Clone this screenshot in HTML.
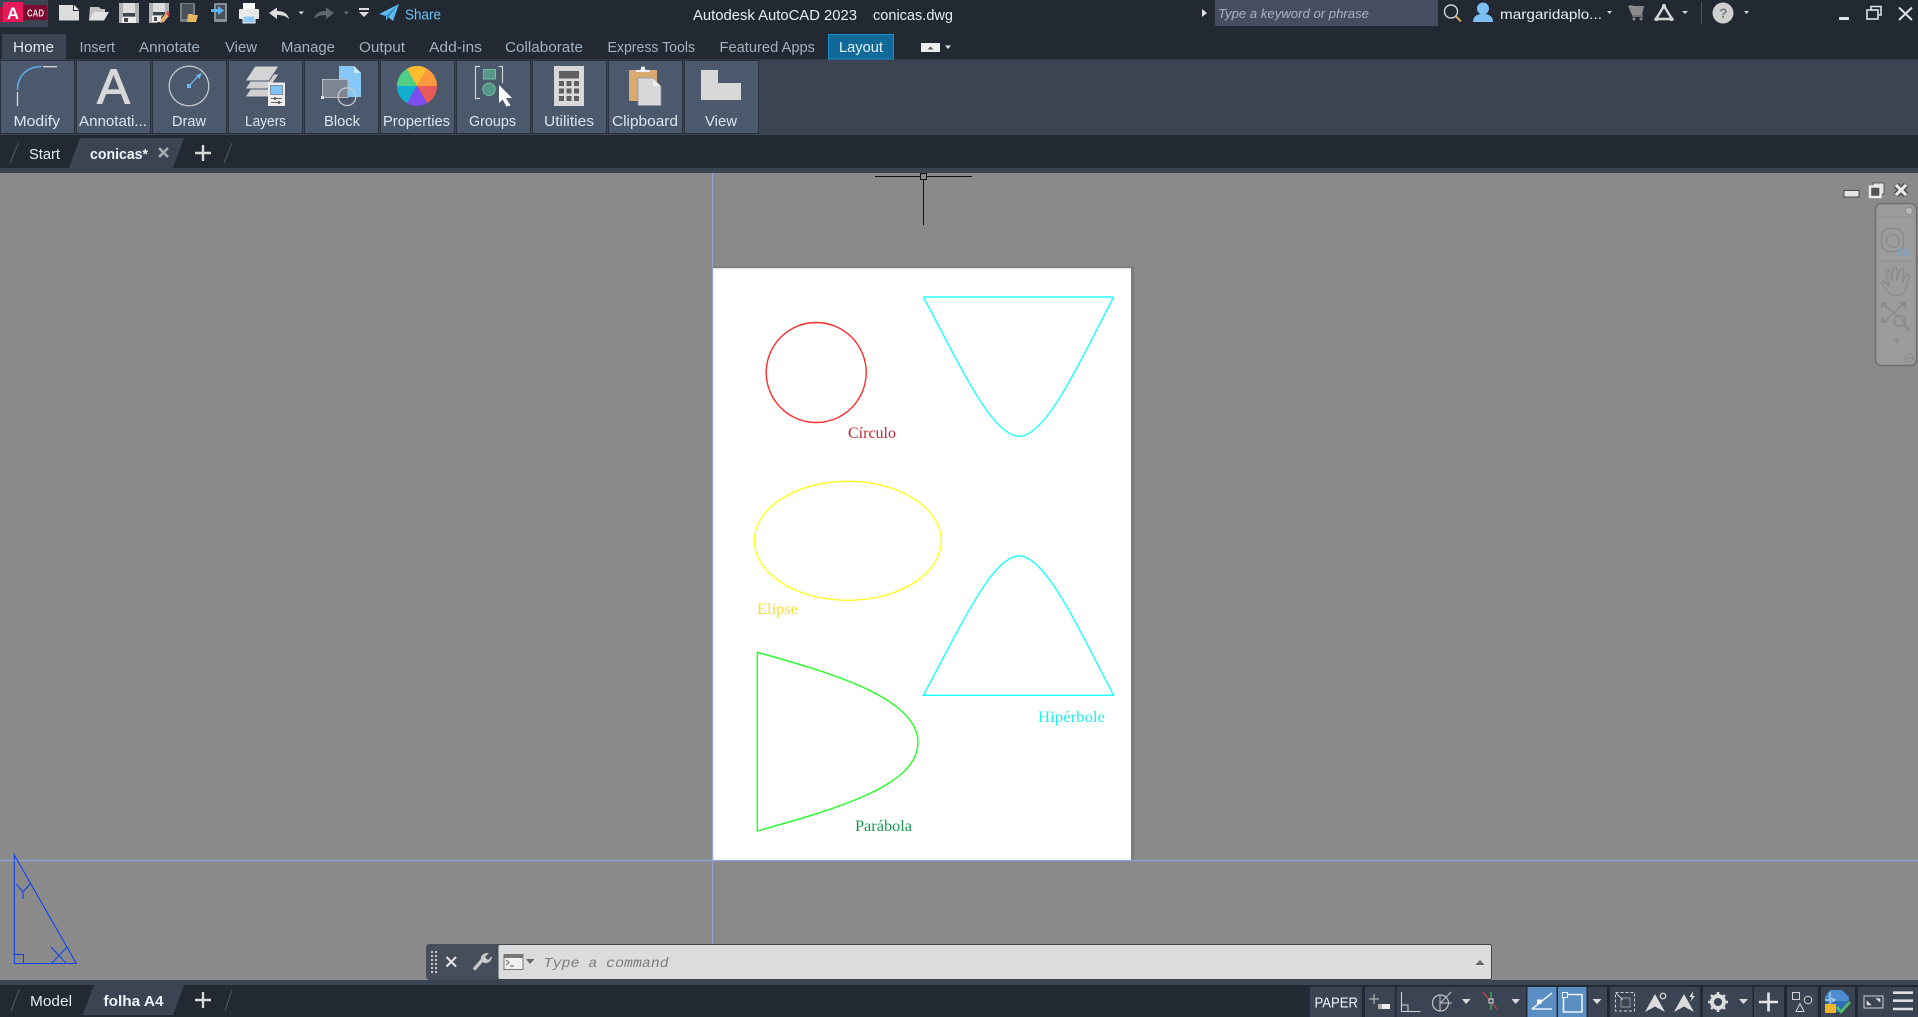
<!DOCTYPE html>
<html><head><meta charset="utf-8"><title>Autodesk AutoCAD 2023 conicas.dwg</title>
<style>
html,body{margin:0;padding:0;background:#8a8a8a;overflow:hidden;width:1918px;height:1017px}
svg{display:block;position:absolute;left:0;top:0}
text{font-family:"Liberation Sans",sans-serif}
.t{font-size:14.5px;fill:#a3b0c0}
.l{font-size:14.5px;fill:#dde5ee}
.s{font-family:"Liberation Serif",serif;font-size:16px}
</style></head><body>
<svg width="1918" height="1017" viewBox="0 0 1918 1017" xmlns="http://www.w3.org/2000/svg">
<!-- base -->
<rect width="1918" height="1017" fill="#8a8a8a"/>
<rect width="1918" height="60" fill="#222933"/>
<rect y="59" width="1918" height="1" fill="#333b48"/>
<rect y="60" width="1918" height="75" fill="#3b4453"/>
<rect y="135" width="1918" height="33" fill="#222933"/>
<rect y="168" width="1918" height="5" fill="#3b4453"/>

<!-- logo -->
<rect x="0" y="0" width="48" height="27" fill="#3b4453"/>
<rect x="23" y="5" width="24" height="15" fill="#7b0a30"/>
<path d="M0 7H23V22H0Z" fill="#b8113f"/>
<path d="M3 2H23V22H3Z" fill="#e8195a"/>
<text x="7" y="19" style="font-size:17px;font-weight:bold" fill="#fff" textLength="12" lengthAdjust="spacingAndGlyphs">A</text>
<text x="27" y="16.5" style="font-size:10.5px;font-weight:bold" fill="#ecdbe1" textLength="17" lengthAdjust="spacingAndGlyphs">CAD</text>

<!-- QAT -->
<path d="M59 5H73L79 11V20.5H59Z" fill="#dcdcdc"/><path d="M73 5V11H79" fill="#222933"/><path d="M74 5L79 10H74Z" fill="#f2f2f2"/>
<path d="M90 7H99L101 9H105V12H94L91 20H89Z" fill="#c4c4c4"/><path d="M94 12H109L104 20.5H89Z" fill="#e2e2e2"/>
<rect x="119" y="3" width="20" height="20" fill="#b0b0b0"/><rect x="123" y="3" width="12" height="10" fill="#dcdcdc"/><rect x="123" y="13" width="12" height="3.5" fill="#3c4450"/><rect x="122" y="17" width="14" height="6" fill="#ececec"/><rect x="124" y="18" width="4" height="4" fill="#444"/>
<path d="M149 3H169V14H164L157 23H149Z" fill="#b0b0b0"/><rect x="153" y="3" width="12" height="9" fill="#dcdcdc"/><rect x="153" y="12" width="12" height="3" fill="#3c4450"/><rect x="152" y="16" width="9" height="6" fill="#ececec"/><rect x="154" y="17" width="3" height="4" fill="#444"/>
<path d="M160 23L161 19L166 13L169 16L164 22Z" fill="#e0b070"/><path d="M166 13L168 11L170 14L168.5 16Z" fill="#e04040"/>
<rect x="180" y="3" width="15" height="19" rx="1" fill="#7a7f86"/><rect x="182" y="4" width="11" height="15" fill="#4a5059"/><path d="M188 14H192L193 15H198L196 22H187Z" fill="#e8b860"/>
<rect x="214" y="3" width="13" height="19" rx="1" fill="#8a8f96"/><rect x="216" y="5" width="9" height="14" fill="#4a5059"/><path d="M211 9H218V6L224 10.5L218 15V12H211Z" fill="#5ab4f0"/>
<rect x="243" y="3" width="12" height="7" fill="#fff"/><rect x="239" y="9" width="20" height="10" rx="1" fill="#e8e8e8"/><rect x="243" y="16" width="12" height="7" fill="#8cc8f4" stroke="#f0f0f0"/>
<path d="M269 13L277 7.5V11C284 11 288 14 289 19C286 16 282 15 277 15V19Z" fill="#dcdcdc"/>
<path d="M298.5 11.5H304L301.2 14.5Z" fill="#dcdcdc"/>
<path d="M334 13L326 7.5V11C319 11 315 14 314 19C317 16 321 15 326 15V19Z" fill="#626870"/>
<path d="M343.5 11.5H349L346.2 14.5Z" fill="#626870"/>
<rect x="359" y="8" width="10" height="2" fill="#dcdcdc"/><path d="M359 12H369L364 17Z" fill="#dcdcdc"/>
<path d="M379 14L399 4L393 21L388 17L386 21V16Z" fill="#5db8f0"/><path d="M386 16L399 4L388 17Z" fill="#2b82c0"/>
<text x="405" y="19.5" style="font-size:15px" fill="#6ec0f4" textLength="36" lengthAdjust="spacingAndGlyphs">Share</text>

<!-- title -->
<text x="693" y="20" style="font-size:14.5px" fill="#e6edf4" textLength="164" lengthAdjust="spacingAndGlyphs">Autodesk AutoCAD 2023</text>
<text x="873" y="20" style="font-size:14.5px" fill="#e6edf4" textLength="80" lengthAdjust="spacingAndGlyphs">conicas.dwg</text>

<!-- info center -->
<path d="M1202 9L1207 13L1202 17Z" fill="#e0e0e0"/>
<rect x="1215" y="0" width="223" height="26" fill="#454e60"/>
<text x="1218" y="18" style="font-size:13px;font-style:italic" fill="#aab2be" textLength="151" lengthAdjust="spacingAndGlyphs">Type a keyword or phrase</text>
<circle cx="1451" cy="11.5" r="6.5" fill="none" stroke="#cfd4da" stroke-width="1.4"/><path d="M1456 16.5L1461 21.5" stroke="#d8a860" stroke-width="2"/>
<circle cx="1483" cy="8.5" r="6" fill="#7cc0f4"/><path d="M1473 22C1473 16 1477 14 1483 14S1493 16 1493 22Z" fill="#7cc0f4"/>
<text x="1500" y="19" style="font-size:14px" fill="#e6edf4" textLength="102" lengthAdjust="spacingAndGlyphs">margaridaplo...</text>
<path d="M1607 11H1612L1609.5 14Z" fill="#d8d8d8"/>
<path d="M1628 6H1644L1642 15H1632Z" fill="#8a8a8a"/><path d="M1629 6H1632L1633 16H1643" fill="none" stroke="#8a8a8a" stroke-width="1.4"/><circle cx="1634" cy="19" r="1.5" fill="#8a8a8a"/><circle cx="1641" cy="19" r="1.5" fill="#8a8a8a"/>
<path d="M1664 6L1656 19H1672Z" fill="none" stroke="#d8d8d8" stroke-width="2.4"/><circle cx="1664" cy="6" r="2" fill="#d8d8d8"/><circle cx="1656.5" cy="19" r="2" fill="#d8d8d8"/><circle cx="1671.5" cy="19" r="2" fill="#d8d8d8"/>
<path d="M1682 11H1688L1685 14Z" fill="#d8d8d8"/>
<rect x="1701" y="2" width="1" height="22" fill="#4a525e"/>
<circle cx="1723" cy="13" r="10.5" fill="#cfcfcf"/><text x="1719" y="18" style="font-size:14px;font-weight:bold" fill="#7a7a7a">?</text>
<path d="M1744 11H1749L1746.5 14Z" fill="#d8d8d8"/>
<rect x="1839" y="17" width="10" height="3" fill="#dfe3e8"/>
<rect x="1867" y="10" width="11" height="9" fill="none" stroke="#dfe3e8" stroke-width="1.6"/><path d="M1871 10V6.5H1881V15H1878" fill="none" stroke="#dfe3e8" stroke-width="1.6"/>
<path d="M1899 7.5L1912 20M1912 7.5L1899 20" stroke="#dfe3e8" stroke-width="2"/>

<!-- ribbon tabs -->
<rect x="2" y="34" width="64" height="26" fill="#3b4453"/>
<text x="13" y="52" class="t" style="fill:#dfe7ef" textLength="41" lengthAdjust="spacingAndGlyphs">Home</text>
<text x="79.5" y="52" class="t" textLength="35.5" lengthAdjust="spacingAndGlyphs">Insert</text>
<text x="139" y="52" class="t" textLength="61" lengthAdjust="spacingAndGlyphs">Annotate</text>
<text x="225" y="52" class="t" textLength="32" lengthAdjust="spacingAndGlyphs">View</text>
<text x="281" y="52" class="t" textLength="54" lengthAdjust="spacingAndGlyphs">Manage</text>
<text x="359" y="52" class="t" textLength="46" lengthAdjust="spacingAndGlyphs">Output</text>
<text x="429" y="52" class="t" textLength="53" lengthAdjust="spacingAndGlyphs">Add-ins</text>
<text x="505" y="52" class="t" textLength="78" lengthAdjust="spacingAndGlyphs">Collaborate</text>
<text x="607.5" y="52" class="t" textLength="87.5" lengthAdjust="spacingAndGlyphs">Express Tools</text>
<text x="719.5" y="52" class="t" textLength="95.5" lengthAdjust="spacingAndGlyphs">Featured Apps</text>
<rect x="828.5" y="34.5" width="65" height="24.5" fill="#0f6a99" stroke="#1b8fcc"/>
<text x="839" y="52" class="t" style="fill:#e8eff5" textLength="44" lengthAdjust="spacingAndGlyphs">Layout</text>
<rect x="921" y="43" width="19" height="9" fill="#ededed"/><path d="M927.5 49.5H933.5L930.5 46.5Z" fill="#555"/>
<path d="M945 45.5H951L948 49Z" fill="#e0e0e0"/>

<!-- ribbon panels -->
<g fill="#4c586b" stroke="#2a313d">
<rect x="0.5" y="60.5" width="74" height="73"/><rect x="76.5" y="60.5" width="74" height="73"/><rect x="152.5" y="60.5" width="74" height="73"/><rect x="228.5" y="60.5" width="74" height="73"/><rect x="304.5" y="60.5" width="74" height="73"/><rect x="380.5" y="60.5" width="74" height="73"/><rect x="456.5" y="60.5" width="74" height="73"/><rect x="532.5" y="60.5" width="74" height="73"/><rect x="608.5" y="60.5" width="74" height="73"/><rect x="684.5" y="60.5" width="74" height="73"/>
</g>
<text x="13.5" y="126" class="l" textLength="46.5" lengthAdjust="spacingAndGlyphs">Modify</text>
<text x="79" y="126" class="l" textLength="68" lengthAdjust="spacingAndGlyphs">Annotati...</text>
<text x="172" y="126" class="l" textLength="34" lengthAdjust="spacingAndGlyphs">Draw</text>
<text x="245" y="126" class="l" textLength="41" lengthAdjust="spacingAndGlyphs">Layers</text>
<text x="324" y="126" class="l" textLength="36" lengthAdjust="spacingAndGlyphs">Block</text>
<text x="383" y="126" class="l" textLength="67" lengthAdjust="spacingAndGlyphs">Properties</text>
<text x="469" y="126" class="l" textLength="47" lengthAdjust="spacingAndGlyphs">Groups</text>
<text x="544" y="126" class="l" textLength="50" lengthAdjust="spacingAndGlyphs">Utilities</text>
<text x="612" y="126" class="l" textLength="66" lengthAdjust="spacingAndGlyphs">Clipboard</text>
<text x="705" y="126" class="l" textLength="32" lengthAdjust="spacingAndGlyphs">View</text>

<!-- modify icon -->
<path d="M17.5 90C17.5 75 28 66.5 41.5 66.5" fill="none" stroke="#5aaae4" stroke-width="1.6"/>
<path d="M43 66.7H57M17.5 92V106" stroke="#d4d4d4" stroke-width="1.4"/>
<!-- annotate A -->
<text x="97" y="103.5" style="font-size:49px" fill="#d8d8d8" stroke="#d8d8d8" stroke-width="1" textLength="33" lengthAdjust="spacingAndGlyphs">A</text>
<!-- draw -->
<circle cx="189" cy="86" r="19.8" fill="none" stroke="#c4c6c8" stroke-width="1.3"/>
<rect x="187" y="84" width="4" height="4" fill="#6cb8ee"/><path d="M189 86L199 75" stroke="#6cb8ee" stroke-width="1.3"/><path d="M202 72.5L199.5 79L196 75.5Z" fill="#6cb8ee"/>
<!-- layers -->
<path d="M255 82H279L269 97H245Z" fill="#d0d0d0" stroke="#4c586b"/>
<path d="M255 74H279L269 89H245Z" fill="#d0d0d0" stroke="#4c586b"/>
<path d="M255 66H279L269 81H245Z" fill="#d4d4d4" stroke="#4c586b"/>
<rect x="268" y="82.5" width="17" height="23.5" fill="#ececec"/><rect x="270.5" y="85.5" width="12" height="9" fill="#7ec4f5" stroke="#555d68" stroke-width=".6"/>
<path d="M271 98.5H282M271 102.5H282" stroke="#666" stroke-width="1.1"/><rect x="274" y="97" width="2" height="3" fill="#666"/><rect x="278" y="101" width="2" height="3" fill="#666"/>
<!-- block -->
<path d="M339 66H354L361 73V97H339Z" fill="#86c7f8"/><path d="M354 66L361 73H354Z" fill="#cde7fb"/>
<rect x="322.5" y="79.5" width="25.5" height="18" fill="#7d8695" stroke="#b4b8be"/>
<rect x="321" y="96" width="3" height="3" fill="#e0e0e0"/>
<circle cx="347" cy="96.7" r="8.8" fill="none" stroke="#c8cacc" stroke-width="1.3"/>
<!-- properties -->
<path d="M417 86L437 86A20 20 0 0 1 427 103.3Z" fill="#e85a5a"/>
<path d="M417 86L427 103.3A20 20 0 0 1 407 103.3Z" fill="#7c4df0"/>
<path d="M417 86L407 103.3A20 20 0 0 1 397 86Z" fill="#12aed0"/>
<path d="M417 86L397 86A20 20 0 0 1 407 68.7Z" fill="#4fcf85"/>
<path d="M417 86L407 68.7A20 20 0 0 1 427 68.7Z" fill="#fdbb30"/>
<path d="M417 86L427 68.7A20 20 0 0 1 437 86Z" fill="#ff9a3c"/>
<!-- groups -->
<path d="M480 66.5H475.5V98.5H480M498.5 66.5H502.5V83" fill="none" stroke="#d0d0d0" stroke-width="1.2"/>
<rect x="483.5" y="69.5" width="12" height="9.5" fill="#59968a" stroke="#6ec09a"/>
<circle cx="489" cy="89.3" r="6.2" fill="#59968a" stroke="#6ec09a"/>
<path d="M499 85L512 98H506L510.5 105.5L506.5 106.5L502.5 99.5L499 103Z" fill="#fff"/>
<!-- utilities -->
<rect x="554" y="66" width="30" height="40" fill="#d8d8d8"/><rect x="559" y="71" width="20" height="7.5" fill="#5f5f5f"/>
<g fill="#5f5f5f"><rect x="559" y="81" width="5" height="5"/><rect x="566.5" y="81" width="5" height="5"/><rect x="574" y="81" width="5" height="5"/><rect x="559" y="88.5" width="5" height="5"/><rect x="566.5" y="88.5" width="5" height="5"/><rect x="574" y="88.5" width="5" height="5"/><rect x="559" y="96" width="5" height="5"/><rect x="566.5" y="96" width="5" height="5"/><rect x="574" y="96" width="5" height="5"/></g>
<!-- clipboard -->
<rect x="629" y="70" width="28" height="31" fill="#d8aa70"/>
<path d="M636 72V70H640.5L641.5 66.5H644.5L645.5 70H650V72Z" fill="#f0f0f0"/>
<path d="M638 78H652.5L661 86.5V105.5H638Z" fill="#d8d8d8" stroke="#8d95a2" stroke-width=".8"/>
<path d="M653 78.5L660.5 86H653Z" fill="#f0f0f0"/>
<!-- view -->
<path d="M701 70H718V83H741V100H701Z" fill="#d8d8d8"/>

<!-- doc tabs -->
<path d="M10 163L18.5 143M224 163L232 143" stroke="#4d5663" stroke-width="1.1"/>
<text x="29" y="159" style="font-size:15px" fill="#e4ebf2" textLength="31" lengthAdjust="spacingAndGlyphs">Start</text>
<path d="M69 168L80 138H184L173 168Z" fill="#3b4453"/>
<text x="90" y="159" style="font-size:15px;font-weight:bold" fill="#eef3f8" textLength="58" lengthAdjust="spacingAndGlyphs">conicas*</text>
<path d="M159 148L168 157M168 148L159 157" stroke="#a6adb5" stroke-width="2.4"/>
<path d="M195 153H211M203 145V161" stroke="#d8d8d8" stroke-width="2.4"/>

<!-- paper -->
<rect x="713" y="266" width="419" height="2" fill="#808080"/>
<rect x="1131" y="267" width="3" height="593" fill="#7c7c7c"/>
<rect x="713" y="268" width="418" height="592" fill="#fff"/>
<rect x="713" y="268" width="418" height="1" fill="#e2e2e2"/>

<!-- drawing -->
<g fill="none" stroke-width="1.4">
<circle cx="816.2" cy="372.5" r="50" stroke="#ff2a2a"/>
<ellipse cx="847.8" cy="540.8" rx="93.5" ry="59.5" stroke="#ffff20"/>
<path d="M923.3 297C960 365 992 436.3 1019 436.3C1046 436.3 1078 365 1113.7 297" stroke="#20ffff"/>
<path d="M923.3 297H1113.7" stroke="#5cffff" stroke-width="2"/>
<path d="M923.3 695.3H1113.7C1078 628 1046 556 1019 556C992 556 960 628 923.3 695.3Z" stroke="#20ffff"/>
<path d="M757.3 652.3V831C840 808 918 785 918 742.3C918 700 840 675 757.3 652.3Z" stroke="#20ff20"/>
</g>
<text x="848" y="438" class="s" fill="#c4252f" textLength="48" lengthAdjust="spacingAndGlyphs">Círculo</text>
<text x="757" y="614" class="s" fill="#f2e22a" textLength="41" lengthAdjust="spacingAndGlyphs">Elipse</text>
<text x="1038" y="722" class="s" fill="#20eef0" textLength="67" lengthAdjust="spacingAndGlyphs">Hipérbole</text>
<text x="855" y="831" class="s" fill="#18994e" textLength="57" lengthAdjust="spacingAndGlyphs">Parábola</text>

<!-- guide lines -->
<path d="M712.5 173V945M0 860.5H1918" stroke="#93a2dc" stroke-width="1.2"/>

<!-- crosshair -->
<path d="M875 176.5H920M927 176.5H972M923.5 180V225" stroke="#111" stroke-width="1"/>
<rect x="920.5" y="173.5" width="6" height="6" fill="none" stroke="#111"/>

<!-- viewport controls -->
<rect x="1844" y="190.5" width="15" height="6.5" fill="#e4e4e4" stroke="#4a4a4a"/>
<rect x="1873" y="183" width="11" height="11" fill="#e4e4e4" stroke="#5a5a5a"/><rect x="1870" y="186.5" width="10.5" height="10.5" fill="#555" stroke="#ececec" stroke-width="2.4"/>
<path d="M1896 185L1906 195M1906 185L1896 195" stroke="#4a4a4a" stroke-width="6"/><path d="M1896 185L1906 195M1906 185L1896 195" stroke="#e8e8e8" stroke-width="3.2"/>

<!-- nav bar -->
<rect x="1875.5" y="203.5" width="41" height="162" rx="6" fill="#9c9c9c" stroke="#6e6e6e" stroke-width="1.5"/>
<path d="M1877 217H1915M1878 261H1914" stroke="#8f8f8f"/>
<circle cx="1909" cy="211" r="3.6" fill="#b6b6b6" stroke="#8a8a8a"/>
<rect x="1881.5" y="228.5" width="22" height="23" rx="8" fill="none" stroke="#8a8a8a" stroke-width="1.4"/>
<circle cx="1893" cy="241" r="6.5" fill="none" stroke="#8a8a8a" stroke-width="1.3"/>
<text x="1896.5" y="256" style="font-size:11px;font-weight:bold" fill="#7ea0c0">2D</text>
<path d="M1888 292C1884 286 1881 284 1882 282C1884 280 1887 284 1889 286L1886 272C1886 269 1889 269 1890 272L1892 281L1893 268C1894 266 1896 266 1897 268L1897 281L1900 270C1901 268 1904 268 1904 271L1902 283L1906 275C1907 273 1910 274 1909 277C1907 285 1906 295 1900 295H1894C1892 295 1890 295 1888 292Z" fill="none" stroke="#8a8a8a" stroke-width="1.3"/>
<path d="M1883 304L1905 322M1903 304L1884 322" stroke="#8a8a8a" stroke-width="1.5"/>
<path d="M1881 302H1888L1881 309ZM1906 302H1899L1906 309ZM1881 323H1888L1881 316Z" fill="#8a8a8a"/>
<circle cx="1900" cy="321" r="5.5" fill="none" stroke="#8a8a8a" stroke-width="1.5"/><path d="M1904 325L1910 331" stroke="#8a8a8a" stroke-width="2.5"/>
<path d="M1893 339H1900L1896.5 343Z" fill="#8a8a8a"/>
<circle cx="1909" cy="358" r="4" fill="none" stroke="#8a8a8a"/><path d="M1906 358H1912" stroke="#8a8a8a"/>

<!-- WCS icon -->
<g fill="none" stroke="#1144ee" stroke-width="1.1">
<path d="M14.3 855V963.5H76.3Z"/><path d="M14.3 954.5H23.5V963.5"/>
<path d="M16 884L23 892L30 884M23 892V899"/>
<path d="M51 947L66 963M67 947L52 963"/>
</g>

<!-- command line -->
<path d="M430 944H499V980H430Q426 980 426 976V948Q426 944 430 944Z" fill="#474e5b"/>
<rect x="498" y="944.5" width="993.5" height="35" rx="2" fill="#dcdcdc" stroke="#3f4650"/>
<g fill="#c8c8c8"><rect x="431" y="951" width="2" height="2"/><rect x="435" y="951" width="2" height="2"/><rect x="431" y="955" width="2" height="2"/><rect x="435" y="955" width="2" height="2"/><rect x="431" y="959" width="2" height="2"/><rect x="435" y="959" width="2" height="2"/><rect x="431" y="963" width="2" height="2"/><rect x="435" y="963" width="2" height="2"/><rect x="431" y="967" width="2" height="2"/><rect x="435" y="967" width="2" height="2"/><rect x="431" y="971" width="2" height="2"/><rect x="435" y="971" width="2" height="2"/></g>
<path d="M446.5 957L456 966.5M456 957L446.5 966.5" stroke="#e4e4e4" stroke-width="2"/>
<path d="M474 969.5L484 958" stroke="#c8c8c8" stroke-width="3.4"/><path d="M481 960C480 956 484 952 489 953L485 957L488 960L492 956C492 961 488 964 484 963Z" fill="#c8c8c8"/>
<rect x="504" y="954.5" width="19" height="15" fill="#f0f0f0" stroke="#777"/><rect x="504" y="954.5" width="19" height="3.5" fill="#777"/><path d="M506 960L509 962.5L506 965M510 966H514" fill="none" stroke="#666"/>
<path d="M526 959H534.5L530 964Z" fill="#666"/>
<text x="543.7" y="967" style="font-family:'Liberation Mono',monospace;font-size:14px;font-style:italic" fill="#7c7c7c" textLength="125" lengthAdjust="spacingAndGlyphs">Type a command</text>
<path d="M1475.5 965H1484.5L1480 960Z" fill="#666"/>

<!-- bottom bar -->
<rect y="980" width="1918" height="5" fill="#3b4453"/>
<rect y="985" width="1918" height="32" fill="#222933"/>
<path d="M11 1011L19 990M225 1011L232 990" stroke="#4d5663" stroke-width="1.1"/>
<text x="30" y="1006" style="font-size:15px" fill="#e4ebf2" textLength="42" lengthAdjust="spacingAndGlyphs">Model</text>
<path d="M82.5 1015L94 985H184L173 1015Z" fill="#3b4453"/>
<text x="103.5" y="1006" style="font-size:15px;font-weight:bold" fill="#eef3f8" textLength="60" lengthAdjust="spacingAndGlyphs">folha A4</text>
<path d="M195 1000H211M203 992V1008" stroke="#d8d8d8" stroke-width="2.4"/>

<!-- status panels -->
<g fill="#3b4453">
<rect x="1310" y="987" width="52" height="30"/><rect x="1365" y="987" width="30" height="30"/><rect x="1396.5" y="987" width="129.5" height="30"/><rect x="1588" y="987" width="19" height="30"/><rect x="1610" y="987" width="90" height="30"/><rect x="1703" y="987" width="49.5" height="30"/><rect x="1754" y="987" width="30" height="30"/><rect x="1787" y="987" width="31" height="30"/><rect x="1821" y="987" width="34" height="30"/><rect x="1858" y="987" width="60" height="30"/>
</g>
<rect x="1527.5" y="987" width="29" height="30" fill="#5b8fc4"/><rect x="1558" y="987" width="28.5" height="30" fill="#5b8fc4"/>
<text x="1314.5" y="1007.5" style="font-size:14.5px" fill="#eef5ff" textLength="43.5" lengthAdjust="spacingAndGlyphs">PAPER</text>
<path d="M1374 994V1004M1369 999H1379" stroke="#c8c8c8" stroke-width="1"/><rect x="1378" y="1004" width="12" height="5" fill="#eee"/><rect x="1378" y="1004" width="4" height="5" fill="#aaa"/>
<path d="M1401.5 992V1011.5H1420.5M1401.5 1005H1408V1011.5" fill="none" stroke="#d0d0d0" stroke-width="1.1"/>
<circle cx="1440.5" cy="1003" r="8" fill="none" stroke="#c4c4c4" stroke-width="1.2"/><path d="M1440.5 1003L1451 992M1440 1003H1452M1440 1011V996" fill="none" stroke="#c4c4c4" stroke-width="1"/>
<path d="M1462 999H1470.5L1466 1004Z" fill="#dcdcdc"/>
<path d="M1491 992V1010" stroke="#4fb060" stroke-width="1.2"/><path d="M1483 992L1498 1010" stroke="#c84040" stroke-width="1.2"/><rect x="1489" y="999" width="4" height="4" fill="#3b4453" stroke="#ddd"/>
<path d="M1511.5 999H1520L1515.7 1004Z" fill="#dcdcdc"/>
<path d="M1532 1009L1552 993M1532 1009H1552" stroke="#e8eef5" stroke-width="1.6"/><rect x="1537" y="999.5" width="4.5" height="4.5" fill="#fff"/>
<rect x="1563.5" y="994.5" width="18.5" height="17.5" fill="none" stroke="#f0f5fa" stroke-width="1.5"/><rect x="1562.5" y="992.5" width="5" height="5" fill="#5b8fc4" stroke="#f0f5fa"/>
<path d="M1592.5 999H1601.5L1597 1004Z" fill="#dcdcdc"/>
<rect x="1615.5" y="992.5" width="19" height="18.5" fill="none" stroke="#d0d0d0" stroke-dasharray="3 2"/><rect x="1621" y="998" width="9" height="9" fill="none" stroke="#9a9a9a"/><path d="M1616 993L1623 1000" stroke="#c8c8c8"/>
<path d="M1655 994L1645 1012L1655 1006.5L1665 1012Z" fill="#dcdcdc"/><circle cx="1663" cy="996" r="2.8" fill="none" stroke="#dcdcdc" stroke-width="1.2"/>
<path d="M1684 994L1674 1012L1684 1006.5L1694 1012Z" fill="#dcdcdc"/><path d="M1693 991L1689.5 997H1692L1690 1002L1695 996H1692.5Z" fill="#dcdcdc"/>
<circle cx="1718" cy="1002" r="6" fill="none" stroke="#dcdcdc" stroke-width="4"/><path d="M1718 992V996M1718 1008V1012M1708 1002H1712M1724 1002H1728M1711 995L1714 998M1722 1006L1725 1009M1725 995L1722 998M1714 1006L1711 1009" stroke="#dcdcdc" stroke-width="2.6"/>
<path d="M1739 999H1748L1743.5 1004Z" fill="#dcdcdc"/>
<path d="M1759 1002H1778M1768.5 992.5V1011.5" stroke="#e4e4e4" stroke-width="2.6"/>
<rect x="1792.5" y="992.5" width="7" height="7" fill="none" stroke="#d4d4d4"/><circle cx="1808" cy="1000" r="3.8" fill="none" stroke="#d4d4d4"/><path d="M1800 1003.5L1804 1011.5H1796Z" fill="none" stroke="#d4d4d4"/>
<circle cx="1837" cy="1001" r="11" fill="#3170b4"/><path d="M1830 990H1842L1849 997V1001H1825V997Z" fill="#4e8cd0"/><path d="M1831 998L1835 1000L1831 1002M1831 1000H1825" stroke="#cfe2f5" fill="none"/><path d="M1830 992V1005" stroke="#cfe2f5"/>
<rect x="1825" y="1004" width="11" height="9" fill="#f0b428"/>
<path d="M1837 1007L1841 1012L1850 1002" fill="none" stroke="#52c060" stroke-width="2.6"/>
<rect x="1864" y="996" width="19" height="12" fill="none" stroke="#c4c4c4" stroke-width="1.1"/><path d="M1876 998.5H1880V1002ZM1867 1005H1871L1867 1001Z" fill="#dcdcdc" stroke="#dcdcdc" stroke-width=".6"/>
<path d="M1893 992.7H1913M1893 1000.7H1913M1893 1009H1913" stroke="#e0e0e0" stroke-width="2.6"/>
</svg>
</body></html>
